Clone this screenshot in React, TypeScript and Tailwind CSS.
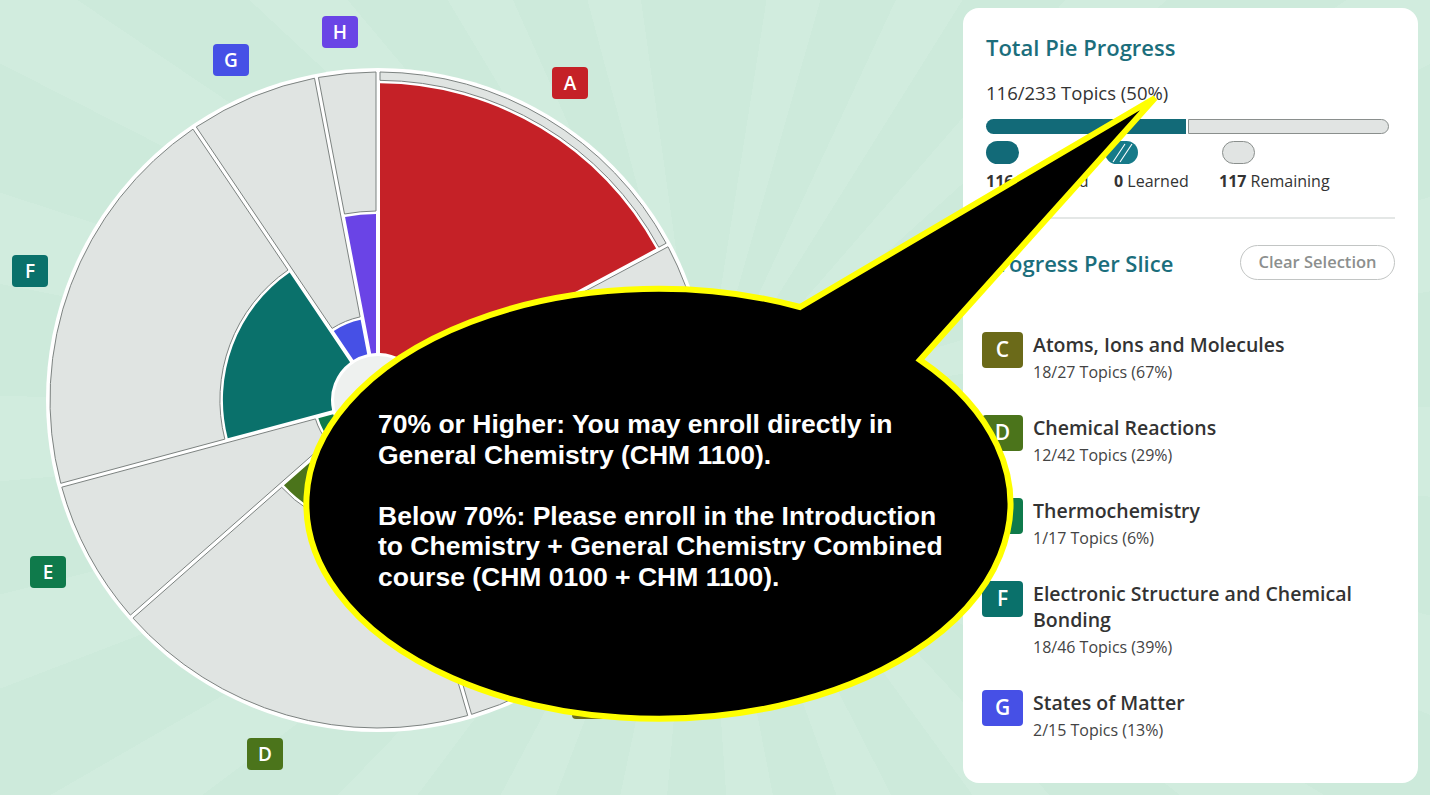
import React from "react";

const CX = 378;
const CY = 400;
const R = 328;
const R0 = 47;
const GAP = 2;

type Slice = { key: string; count: number; frac: number; color: string };

const SLICES: Slice[] = [
  { key: "A", count: 40, frac: 0.965, color: "#c52127" },
  { key: "B", count: 39, frac: 0.6, color: "#d2541e" },
  { key: "C", count: 27, frac: 0.67, color: "#6b6a19" },
  { key: "D", count: 42, frac: 0.29, color: "#4b741b" },
  { key: "E", count: 17, frac: 0.06, color: "#0f7a4b" },
  { key: "F", count: 46, frac: 0.39, color: "#0a716b" },
  { key: "G", count: 15, frac: 0.13, color: "#4650e6" },
  { key: "H", count: 7, frac: 0.5, color: "#6a44e6" },
];

// slice B's tag sits under the bubble in the screenshot, so it is left out
const LABELS: { key: string; x: number; y: number; color: string }[] = [
  { key: "H", x: 340, y: 32, color: "#6a44e6" },
  { key: "G", x: 231, y: 60, color: "#4650e6" },
  { key: "A", x: 570, y: 83, color: "#c52127" },
  { key: "F", x: 30, y: 271, color: "#0a716b" },
  { key: "E", x: 48, y: 572, color: "#0f7a4b" },
  { key: "D", x: 265, y: 754, color: "#4b741b" },
  { key: "C", x: 590, y: 703, color: "#6b6a19" },
];

const ITEMS = [
  { key: "C", color: "#6b6a19", title: "Atoms, Ions and Molecules", sub: "18/27 Topics (67%)" },
  { key: "D", color: "#4b741b", title: "Chemical Reactions", sub: "12/42 Topics (29%)" },
  { key: "E", color: "#0f7a4b", title: "Thermochemistry", sub: "1/17 Topics (6%)" },
  {
    key: "F",
    color: "#0a716b",
    title: "Electronic Structure and Chemical Bonding",
    sub: "18/46 Topics (39%)",
  },
  { key: "G", color: "#4650e6", title: "States of Matter", sub: "2/15 Topics (13%)" },
];

function pt(r: number, deg: number) {
  const a = (deg * Math.PI) / 180;
  return `${(CX + r * Math.sin(a)).toFixed(2)} ${(CY - r * Math.cos(a)).toFixed(2)}`;
}

function wedge(r1: number, r2: number, a0: number, a1: number) {
  const o1 = (Math.asin(GAP / r1) * 180) / Math.PI;
  const o2 = (Math.asin(GAP / r2) * 180) / Math.PI;
  const big2 = a1 - a0 - 2 * o2 > 180 ? 1 : 0;
  const big1 = a1 - a0 - 2 * o1 > 180 ? 1 : 0;
  return [
    `M ${pt(r1, a0 + o1)}`,
    `L ${pt(r2, a0 + o2)}`,
    `A ${r2} ${r2} 0 ${big2} 1 ${pt(r2, a1 - o2)}`,
    `L ${pt(r1, a1 - o1)}`,
    `A ${r1} ${r1} 0 ${big1} 0 ${pt(r1, a0 + o1)}`,
    "Z",
  ].join(" ");
}

function PieChart() {
  const total = SLICES.reduce((s, x) => s + x.count, 0);
  let start = 0;
  const parts = SLICES.map((s) => {
    const a0 = start;
    const a1 = start + (s.count / total) * 360;
    start = a1;
    const fr = R0 + s.frac * (R - R0);
    return { ...s, a0, a1, fr };
  });

  return (
    <svg viewBox="0 0 963 795" className="block h-[795px] w-[963px]">
      <circle cx={CX} cy={CY} r={R + 4} fill="#ffffff" />
      {parts.map((p) => (
        <g key={p.key}>
          <path
            d={wedge(p.fr + 1.5, R, p.a0, p.a1)}
            fill="#e0e4e2"
            stroke="#7d8381"
            strokeWidth={1}
          />
          <path d={wedge(R0, p.fr - 1.5, p.a0, p.a1)} fill={p.color} />
        </g>
      ))}
      <circle cx={CX} cy={CY} r={R0 - 3} fill="#eef1ef" />
      {LABELS.map((l) => (
        <g key={l.key}>
          <rect x={l.x - 18} y={l.y - 16} width={36} height={32} rx={4} fill={l.color} />
          <text
            x={l.x}
            y={l.y + 7}
            textAnchor="middle"
            fill="#ffffff"
            fontSize={19}
            fontWeight={600}
            fontFamily="'Open Sans', 'Noto Sans', sans-serif"
          >
            {l.key}
          </text>
        </g>
      ))}
    </svg>
  );
}

function HatchPill() {
  return (
    <svg width="33" height="23" viewBox="0 0 33 23">
      <rect x="0" y="0" width="33" height="23" rx="11.5" fill="#167a89" />
      <line x1="8" y1="21" x2="20" y2="3" stroke="#ffffff" strokeWidth="1.1" />
      <line x1="15" y1="21" x2="27" y2="3" stroke="#ffffff" strokeWidth="1.1" />
    </svg>
  );
}

function SliceItem({
  letter,
  color,
  title,
  sub,
}: {
  letter: string;
  color: string;
  title: string;
  sub: string;
}) {
  return (
    <div className="flex gap-[10px]">
      <div
        className="flex h-9 w-[41px] shrink-0 items-center justify-center rounded-[4px] text-[21px] font-semibold text-white"
        style={{ backgroundColor: color }}
      >
        {letter}
      </div>
      <div className="min-w-0 flex-1">
        <p className="text-[19.5px] leading-[26px] font-semibold text-[#333333]">{title}</p>
        <p className="mt-[1px] text-[16px] leading-[26px] text-[#444444]">{sub}</p>
      </div>
    </div>
  );
}

function ProgressCard() {
  return (
    <aside className="mt-2 mr-3 mb-3 flex w-[455px] shrink-0 flex-col rounded-[16px] bg-white px-[23px] pt-[25px] font-['Open_Sans','Noto_Sans',sans-serif]">
      <h2 className="text-[22px] leading-[28px] font-semibold text-[#1b6e7c]">
        Total Pie Progress
      </h2>
      <p className="mt-[19px] text-[18.5px] leading-[26px] text-[#333333]">
        116/233 Topics (50%)
      </p>

      <div className="mt-[13px] flex h-[15px] w-[403px] gap-[2px]">
        <div className="h-full w-[200px] rounded-l-full bg-[#126a78]" />
        <div className="h-full flex-1 rounded-r-full border border-[#8a8f8d] bg-[#e1e4e3]" />
      </div>

      <div className="mt-[7px] flex h-[23px] w-[403px]">
        <div className="h-[23px] w-[33px] rounded-full bg-[#126a78]" />
        <div className="ml-[86px]">
          <HatchPill />
        </div>
        <div className="ml-[84px] h-[23px] w-[33px] rounded-full border border-[#8a8f8d] bg-[#e1e4e3]" />
      </div>

      <div className="mt-[6px] flex text-[16px] leading-[22px] text-[#333333]">
        <span className="w-[128px]">
          <b className="font-bold">116</b> Mastered
        </span>
        <span className="w-[105px]">
          <b className="font-bold">0</b> Learned
        </span>
        <span>
          <b className="font-bold">117</b> Remaining
        </span>
      </div>

      <div className="mt-[25px] h-[2px] w-full bg-[#e4e7e6]" />

      <div className="mt-[26px] flex h-[35px] items-center justify-between">
        <h2 className="text-[22px] leading-[28px] font-semibold text-[#1b6e7c]">
          Progress Per Slice
        </h2>
        <button
          type="button"
          className="h-[35px] w-[155px] rounded-full border-[1.5px] border-[#c2c5c4] text-[16.5px] font-semibold text-[#8c8f8e]"
        >
          Clear Selection
        </button>
      </div>

      <div className="mt-[52px] -ml-1 flex flex-col gap-[30px]">
        {ITEMS.map((it) => (
          <SliceItem key={it.key} letter={it.key} color={it.color} title={it.title} sub={it.sub} />
        ))}
      </div>
    </aside>
  );
}

function SpeechBubble() {
  return (
    <>
      <svg
        className="pointer-events-none absolute inset-0 h-[795px] w-[1430px]"
        viewBox="0 0 1430 795"
      >
        <path
          d="M 800 307 L 1155 98 L 920 360 A 352 215 0 1 1 800 307 Z"
          fill="#000000"
          stroke="#ffff00"
          strokeWidth={6}
          strokeLinejoin="miter"
        />
      </svg>
      <div className="pointer-events-none absolute top-[409px] left-[378px] font-['Liberation_Sans',Arial,sans-serif] text-[26.5px] leading-[30.5px] font-bold whitespace-nowrap text-white">
        70% or Higher: You may enroll directly in
        <br />
        General Chemistry (CHM 1100).
        <br />
        <br />
        Below 70%: Please enroll in the Introduction
        <br />
        to Chemistry + General Chemistry Combined
        <br />
        course (CHM 0100 + CHM 1100).
      </div>
    </>
  );
}

export default function App() {
  return (
    <div className="relative flex h-[795px] w-[1430px] overflow-hidden bg-[#cdeadb] bg-[repeating-conic-gradient(from_0deg_at_700px_420px,#cdeadb_0deg_9deg,#d1ecde_9deg_16deg)]">
      <div className="flex-1">
        <PieChart />
      </div>
      <ProgressCard />
      <SpeechBubble />
    </div>
  );
}
